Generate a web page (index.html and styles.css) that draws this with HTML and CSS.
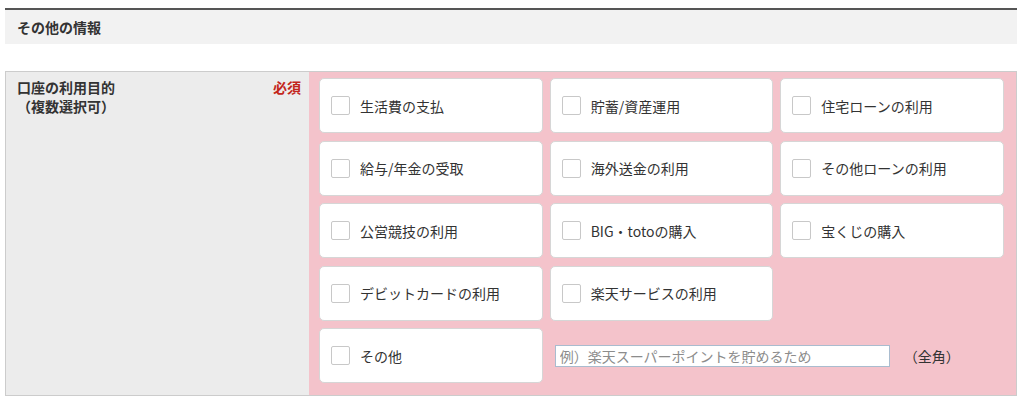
FILE: index.html
```html
<!DOCTYPE html>
<html lang="ja">
<head>
  <meta charset="UTF-8">
  <meta name="viewport" content="width=device-width, initial-scale=1.0">
  <title>その他の情報</title>
  <link rel="stylesheet" href="styles.css">
</head>
<body>
  <div class="wrap">
    <h2 class="section-title">その他の情報</h2>

    <div class="form-row">
      <div class="form-label">
        <span class="label-text">口座の利用目的<br>（複数選択可）</span>
        <span class="required">必須</span>
      </div>
      <div class="form-field">
        <label class="choice"><span class="box"></span>生活費の支払</label>
        <label class="choice"><span class="box"></span>貯蓄/資産運用</label>
        <label class="choice"><span class="box"></span>住宅ローンの利用</label>
        <label class="choice"><span class="box"></span>給与/年金の受取</label>
        <label class="choice"><span class="box"></span>海外送金の利用</label>
        <label class="choice"><span class="box"></span>その他ローンの利用</label>
        <label class="choice"><span class="box"></span>公営競技の利用</label>
        <label class="choice"><span class="box"></span>BIG・totoの購入</label>
        <label class="choice"><span class="box"></span>宝くじの購入</label>
        <label class="choice"><span class="box"></span>デビットカードの利用</label>
        <label class="choice"><span class="box"></span>楽天サービスの利用</label>
        <div class="empty"></div>
        <label class="choice"><span class="box"></span>その他</label>
        <div class="other-input">
          <input type="text" class="text-input" placeholder="例）楽天スーパーポイントを貯めるため">
          <span class="note">（全角）</span>
        </div>
      </div>
    </div>
  </div>
</body>
</html>
```

FILE: styles.css
```css
body {
  margin: 0;
  font-family: "Noto Sans CJK JP", "Noto Sans", sans-serif;
  color: #333;
  background: #fff;
}

.wrap {
  margin: 8px 7px 0 5px;
}

.section-title {
  margin: 0;
  height: 34px;
  line-height: 34px;
  padding-left: 12px;
  border-top: 2px solid #555;
  background-color: #f2f2f2;
  font-size: 14px;
  font-weight: bold;
}

.form-row {
  display: grid;
  grid-template-columns: 303px 1fr;
  margin-top: 27px;
  border: 1px solid #ccc;
}

.form-label {
  display: flex;
  justify-content: space-between;
  align-items: flex-start;
  padding: 6px 8px 0 11px;
  background-color: #ececec;
  font-size: 14px;
  font-weight: bold;
  line-height: 19px;
}

.required {
  color: #c3261b;
}

.form-field {
  display: grid;
  grid-template-columns: repeat(3, 1fr);
  grid-auto-rows: 55px;
  gap: 7.5px 7px;
  padding: 6px 12px 12px 10px;
  background-color: #f4c3cb;
}

.choice {
  display: flex;
  align-items: center;
  padding-left: 11px;
  background: #fff;
  border: 1px solid #d6d6d6;
  border-radius: 5px;
  font-size: 14px;
}

.box {
  width: 17px;
  height: 17px;
  margin-right: 10px;
  border: 1px solid #c8c8c8;
  border-radius: 2px;
  background: #fff;
}

.other-input {
  grid-column: 2 / 4;
  display: flex;
  align-items: center;
  padding-left: 5px;
}

.text-input {
  width: 335px;
  height: 22px;
  box-sizing: border-box;
  padding: 0 4px;
  border: 1px solid #a9bccf;
  font-family: inherit;
  font-size: 14px;
  color: #333;
}

.text-input::placeholder {
  color: #8c8c8c;
}

.note {
  margin-left: 14px;
  font-size: 14px;
}
```
